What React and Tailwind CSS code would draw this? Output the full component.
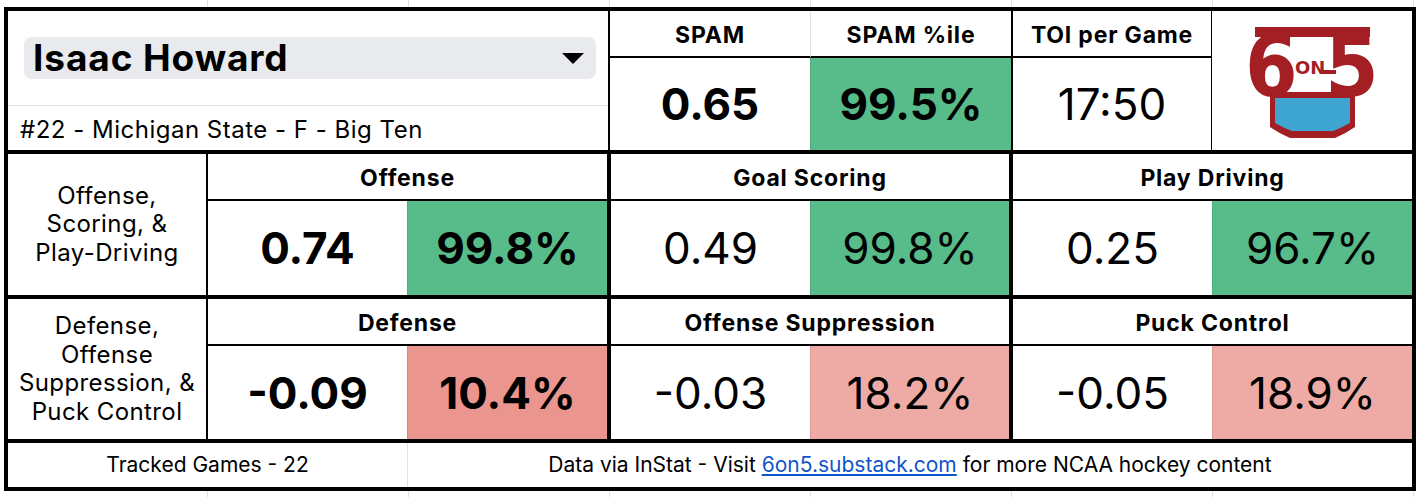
import React from 'react';

// spreadsheet gridline strip above / below the card
const GridStrip = ({ h }) => (
  <div className={`flex ${h}`}>
    <div className="w-[208px] border-r border-[#e2e2e2]" />
    <div className="w-[201px] border-r border-[#e2e2e2]" />
    <div className="w-[201px] border-r border-[#e2e2e2]" />
    <div className="w-[201px] border-r border-[#e2e2e2]" />
    <div className="w-[201px] border-r border-[#e2e2e2]" />
    <div className="w-[201px] border-r border-[#e2e2e2]" />
    <div className="w-[201px] border-r border-[#e2e2e2]" />
  </div>
);

// 6on5 logo, drawn over the whole logo cell
const Logo = () => (
  <svg width="200" height="139" viewBox="-28 -9 200 139">
    <path d="M30 72 H115 V107 Q105 114 95 118 H50 Q40 114 30 107 Z" fill="#a31f24" />
    <path d="M35 78 H110 V103 Q101 108 93 111 H52 Q44 108 35 103 Z" fill="#3ea5d0" />
    <rect x="15" y="7" width="115" height="10" fill="#a31f24" />
    <g fill="#a31f24" fontFamily="DejaVu Sans" fontWeight="bold">
      <text transform="translate(5 76) scale(0.88 1)" fontSize="86">6</text>
      <text transform="translate(85 76) scale(0.9 1)" fontSize="86">5</text>
      <text x="55" y="54" fontSize="18">ON</text>
    </g>
    <rect x="82" y="50" width="14" height="4" fill="#a31f24" />
  </svg>
);

const Header = ({ children, className = '' }) => (
  <div className={`h-[47px] border-b-2 border-black flex items-center justify-center pt-[4px] text-[23px] tracking-[0.8px] font-bold ${className}`}>
    {children}
  </div>
);

const Group = ({ title, value, pct, bold, pctBg, className }) => (
  <div className={`flex flex-col ${className}`}>
    <Header>{title}</Header>
    <div className="flex flex-1">
      <div className={`w-[199px] flex items-center justify-center text-[44px] ${bold ? 'font-bold' : 'font-normal'}`}>
        {value}
      </div>
      <div className={`flex-1 flex items-center justify-center text-[44px] ${pctBg} ${bold ? 'font-bold' : 'font-normal'}`}>
        {pct}
      </div>
    </div>
  </div>
);

const Label = ({ children }) => (
  <div className="w-[200px] border-r-2 border-black flex items-center justify-center text-center text-[24px] tracking-[0.4px] leading-[28.5px]">
    <div>{children}</div>
  </div>
);

export default function App() {
  const green = 'bg-[#57bb8a] border-l border-[#4eab7c]';
  const redStrong = 'bg-[#ea968f] border-l border-[#d98880]';
  const redLight = 'bg-[#eeaba6] border-l border-[#dc9b96]';

  return (
    <div className="w-[1421px] h-[497px] bg-white text-black font-[Inter] overflow-hidden">
      <GridStrip h="h-[7px]" />
      <div className="flex">
        <div className="w-[4px]" />
        <div className="w-[1412px] h-[484px] border-4 border-black flex flex-col">
          {/* player header */}
          <div className="h-[143px] border-b-4 border-black flex">
            <div className="w-[602px] border-r-2 border-black flex flex-col">
              <div className="h-[95px] border-b border-[#e2e2e2] flex items-center pl-4 pr-3">
                <div className="flex-1 h-[42px] rounded-lg bg-[#e8eaed] flex items-center pl-[9px] pr-3">
                  <span className="flex-1 text-[37px] font-bold tracking-[0.9px]">Isaac Howard</span>
                  <svg width="22" height="11" viewBox="0 0 22 11"><path d="M0 0 H22 L11 11 Z" fill="#000" /></svg>
                </div>
              </div>
              <div className="flex-1 flex items-center pl-3 pt-1 text-[24px] tracking-[0.5px]">#22 - Michigan State - F - Big Ten</div>
            </div>
            <div className="w-[200px] flex flex-col">
              <Header>SPAM</Header>
              <div className="flex-1 flex items-center justify-center text-[44px] font-bold">0.65</div>
            </div>
            <div className="w-[203px] border-r-2 border-black flex flex-col">
              <Header className="border-l border-l-[#e2e2e2]">SPAM %ile</Header>
              <div className={`flex-1 flex items-center justify-center text-[44px] font-bold ${green}`}>99.5%</div>
            </div>
            <div className="w-[199px] border-r border-black flex flex-col">
              <Header>TOI per Game</Header>
              <div className="flex-1 flex items-center justify-center text-[44px]">17:50</div>
            </div>
            <div className="flex-1 flex items-center justify-center">
              <Logo />
            </div>
          </div>

          {/* offense */}
          <div className="h-[145px] border-b-4 border-black flex">
            <Label>Offense,<br />Scoring, &amp;<br />Play-Driving</Label>
            <Group className="w-[403px] border-r-4 border-black" title="Offense" value="0.74" pct="99.8%" bold pctBg={green} />
            <Group className="w-[402px] border-r-4 border-black" title="Goal Scoring" value="0.49" pct="99.8%" pctBg={green} />
            <Group className="flex-1" title="Play Driving" value="0.25" pct="96.7%" pctBg={green} />
          </div>

          {/* defense */}
          <div className="h-[144px] border-b-4 border-black flex">
            <Label>Defense,<br />Offense<br />Suppression, &amp;<br />Puck Control</Label>
            <Group className="w-[403px] border-r-4 border-black" title="Defense" value="-0.09" pct="10.4%" bold pctBg={redStrong} />
            <Group className="w-[402px] border-r-4 border-black" title="Offense Suppression" value="-0.03" pct="18.2%" pctBg={redLight} />
            <Group className="flex-1" title="Puck Control" value="-0.05" pct="18.9%" pctBg={redLight} />
          </div>

          {/* footer */}
          <div className="flex-1 flex text-[21px]">
            <div className="w-[400px] border-r border-[#e2e2e2] flex items-center justify-center">Tracked Games - 22</div>
            <div className="flex-1 flex items-center justify-center">
              Data via InStat - Visit&nbsp;
              <a href="#" className="text-[#1155cc] underline">6on5.substack.com</a>
              &nbsp;for more NCAA hockey content
            </div>
          </div>
        </div>
      </div>
      <GridStrip h="h-[6px]" />
    </div>
  );
}
